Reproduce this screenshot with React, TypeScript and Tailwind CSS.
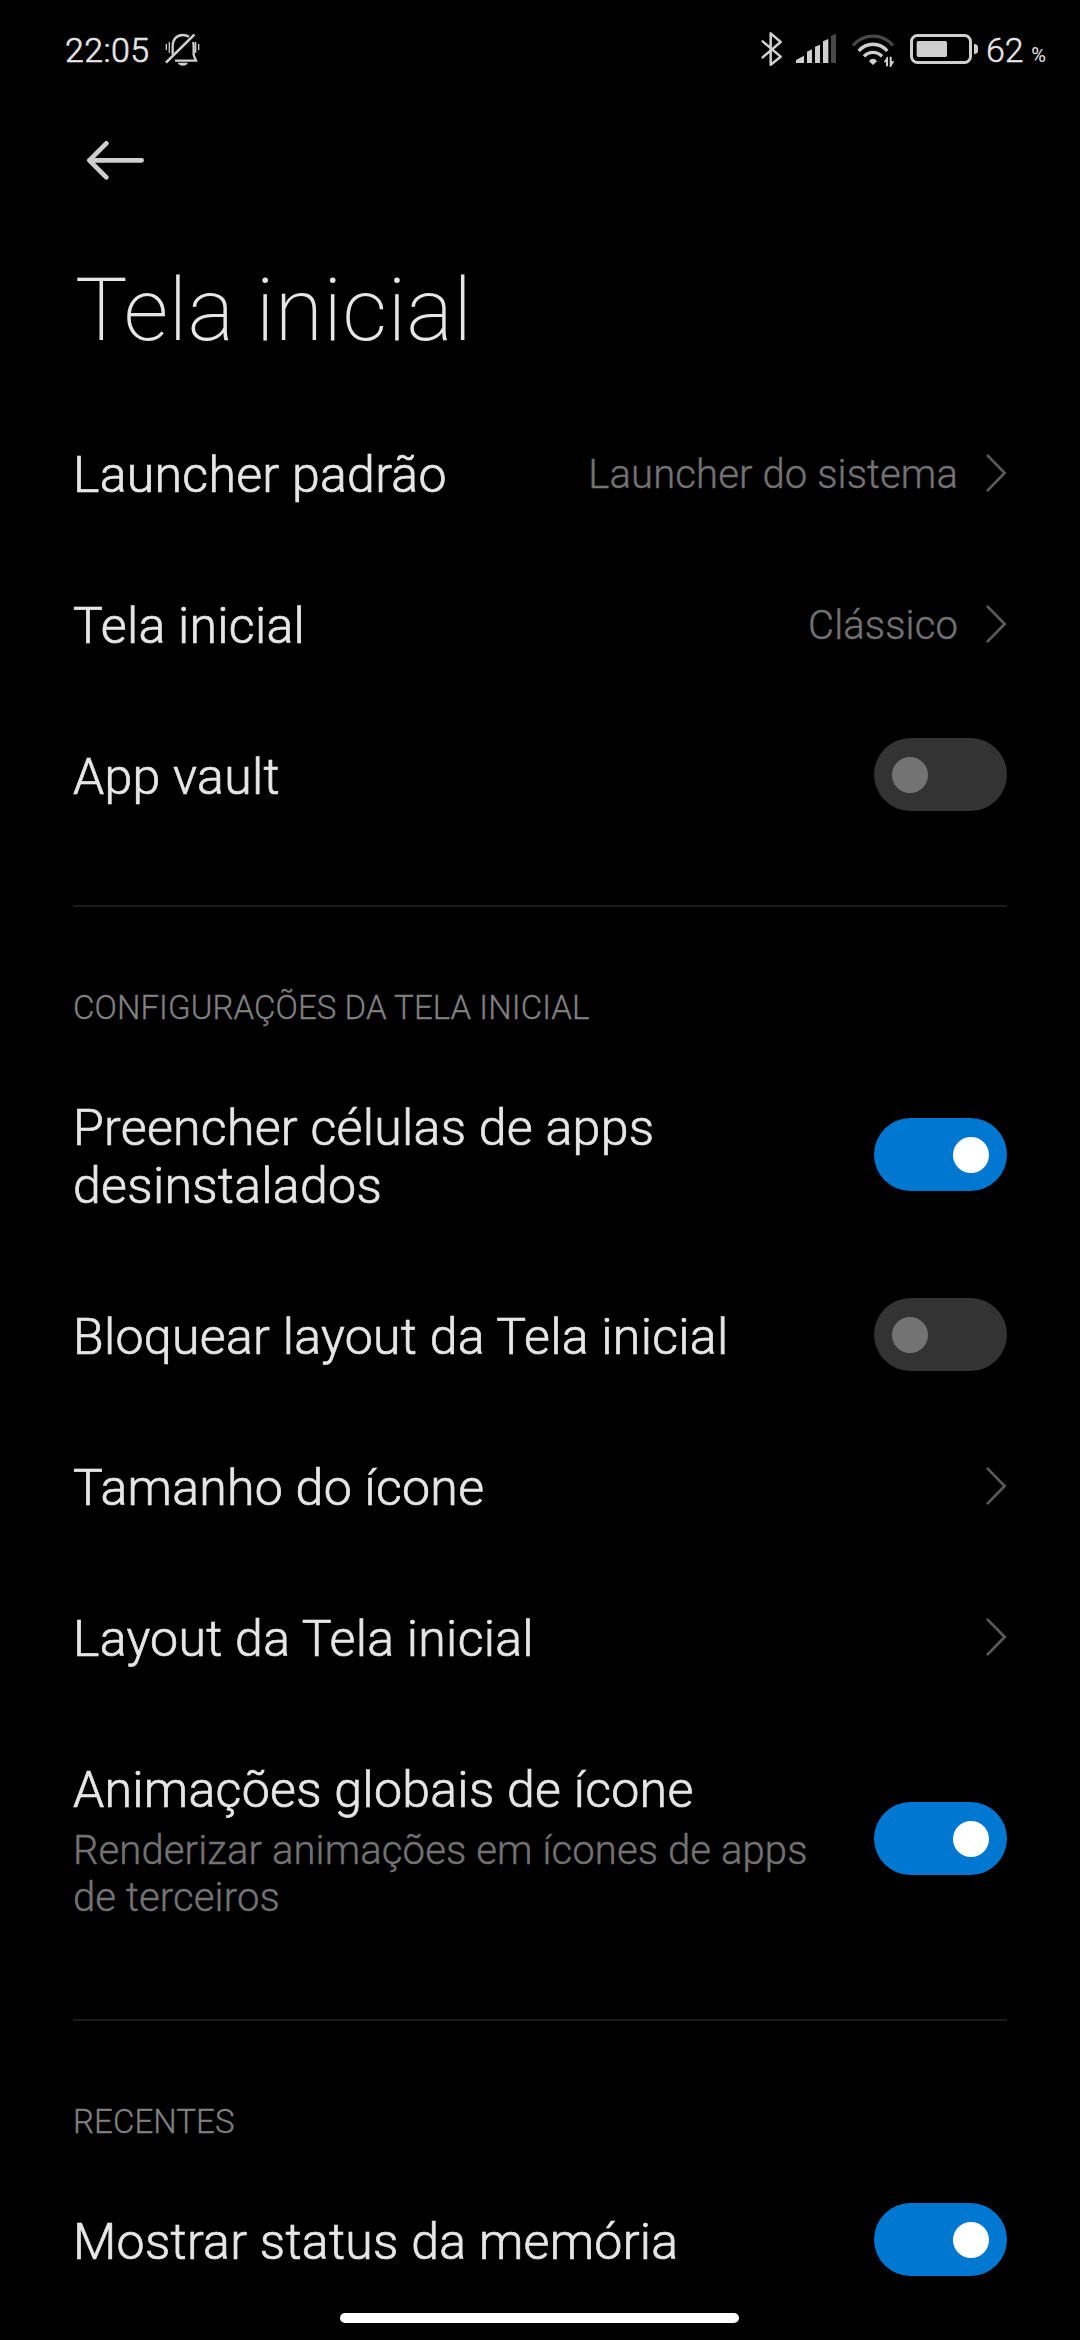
import type { ReactNode } from "react";

function BellOff() {
  return (
    <svg className="h-[60px] w-[40px]" viewBox="340 0 120 180" fill="none" stroke="#cfcfcf" strokeWidth="7">
      <path d="M369 104V78C369 57 382 45 400 45C407 45 413 47 418 50" />
      <path d="M430 66C432 70 432 74 432 80V102C432 110 436 114 439 122H376" />
      <path d="M349 128L434 44" strokeWidth="8" />
      <path d="M384 128H415C412 134 407 137 400 137S387 134 384 128Z" fill="#cfcfcf" stroke="none" />
      <path d="M350 72V90M359 66V98M438 66V98M447 72V90" strokeWidth="4" />
    </svg>
  );
}

function Bluetooth() {
  return (
    <svg className="h-[60px] w-[35px]" viewBox="0 0 105 180" fill="none" stroke="#cfcfcf" strokeWidth="7.5" strokeLinejoin="round" strokeLinecap="round">
      <path d="M38 64L92 110L62 134V40L92 66L38 112" />
    </svg>
  );
}

function Signal() {
  return (
    <svg className="h-[60px] w-[55px]" viewBox="105 0 165 180" fill="#cfcfcf">
      <path d="M138 129V120L162 107V129Z" />
      <path d="M171 129V95L186 88V129Z" />
      <path d="M195 129V80L210 74V129Z" />
      <path d="M219 129V64L235 57V129Z" />
      <path d="M243 129V48L258 41V129Z" fill="#484848" />
    </svg>
  );
}

function Wifi() {
  return (
    <svg className="h-[60px] w-[60px]" viewBox="270 0 180 180" fill="none" strokeWidth="10">
      <path d="M309 76C342 39 396 39 429 76" stroke="#484848" />
      <path d="M326 93C350 66 388 66 412 93" stroke="#cfcfcf" />
      <path d="M342 109C357 93 381 93 396 109" stroke="#cfcfcf" />
      <path d="M357 124C363 114 375 114 381 124L369 135Z" fill="#cfcfcf" stroke="none" />
      <path d="M401 127L411 110H414V139H408V127ZM419 110H425V124H433L423 141H419Z" fill="#cfcfcf" stroke="none" />
    </svg>
  );
}

function Battery() {
  return (
    <svg className="h-[60px] w-[84px]" viewBox="450 0 252 180" fill="#cfcfcf">
      <rect x="484.500" y="46.500" width="177" height="81" rx="18" fill="none" stroke="#cfcfcf" strokeWidth="9" />
      <rect x="500" y="63" width="91" height="48" rx="5" />
      <path d="M672 72C680 72 684 76 684 82V92C684 98 680 102 672 102Z" />
    </svg>
  );
}

function BackArrow() {
  return (
    <svg className="h-[40px] w-[60px]" viewBox="0 0 180 120" fill="none" stroke="#cfcfcf" strokeWidth="14" strokeLinecap="round" strokeLinejoin="round">
      <path d="M67 10L16 61L67 112M16 61H173" />
    </svg>
  );
}

function Chevron() {
  return (
    <svg className="h-[38px] w-[21px] shrink-0" viewBox="0 0 63 114" fill="none" stroke="#5a5a5a" strokeWidth="8" strokeLinecap="round" strokeLinejoin="round">
      <path d="M5 5L56 57L5 109" />
    </svg>
  );
}

function Toggle({ on = false }: { on?: boolean }) {
  return (
    <div
      role="switch"
      aria-checked={on}
      className={
        "flex h-[73.5px] w-[133.5px] shrink-0 items-center rounded-full px-[18.5px] " +
        (on ? "justify-end bg-[#0077d0]" : "justify-start bg-[#333333]")
      }
    >
      <div className={"size-9 rounded-full " + (on ? "bg-white" : "bg-[#737373]")} />
    </div>
  );
}

function Row({ title, summary, value, children }: { title: string; summary?: string; value?: string; children: ReactNode }) {
  return (
    <div className="flex items-center justify-between">
      <div className="max-w-[760px] pt-[49px] pb-[44px] font-light">
        <div className="text-[50px] leading-[58px] tracking-[0.3px] text-[#e6e6e6] [-webkit-text-stroke:0.7px]">
          {title.split("\n").map((line) => (
            <div key={line} className="whitespace-nowrap">{line}</div>
          ))}
        </div>
        {summary && (
          <div className="pt-[8px] text-[40px] leading-[47px] tracking-[0.12px] text-[#737373] [-webkit-text-stroke:0.4px]">{summary}</div>
        )}
      </div>
      <div className="flex items-center justify-end">
        {value && (
          <span className="mr-[28px] pt-[3px] whitespace-nowrap text-[40px] font-light leading-[47px] tracking-[0.12px] text-[#737373] [-webkit-text-stroke:0.4px]">
            {value}
          </span>
        )}
        {children}
      </div>
    </div>
  );
}

function Divider() {
  return <div className="h-[2px] bg-[#1a1a1a]" />;
}

function SectionTitle({ children }: { children: ReactNode }) {
  return (
    <div className="pt-[82px] pb-[23px] text-[33px] font-light leading-[38px] tracking-[0.08px] text-[#808080] [-webkit-text-stroke:0.3px]">
      {children}
    </div>
  );
}

export default function App() {
  return (
    <div className="relative h-[2340px] w-[1080px] overflow-hidden bg-black font-['Roboto',sans-serif]">
      <header className="flex h-[100px] items-center justify-between pl-[65px] pr-[34px] text-[#e6e6e6]">
        <div className="flex items-center">
          <span className="w-[98px] text-[34px] font-light tracking-[0.4px] [-webkit-text-stroke:0.6px]">22:05</span>
          <BellOff />
        </div>
        <div className="flex items-center">
          <Bluetooth />
          <Signal />
          <Wifi />
          <Battery />
          <div className="flex w-[62px] items-baseline justify-between pl-[2px]">
            <span className="text-[34px] font-light [-webkit-text-stroke:0.4px]">62</span>
            <span className="text-[20px]">%</span>
          </div>
        </div>
      </header>
      <div className="flex h-[120px] items-start pl-[84px] pt-[40px]">
        <BackArrow />
      </div>
      <main className="px-[73px]">
        <h1 className="h-[177px] pt-[38px] pl-[2px] text-[88px] font-extralight leading-[103px] tracking-[0.2px] text-[#e6e6e6]">Tela inicial</h1>
        <Row title="Launcher padrão" value="Launcher do sistema"><Chevron /></Row>
        <Row title="Tela inicial" value="Clássico"><Chevron /></Row>
        <Row title="App vault"><Toggle /></Row>
        <div className="pt-[55px]"><Divider /></div>
        <SectionTitle>CONFIGURAÇÕES DA TELA INICIAL</SectionTitle>
        <Row title={"Preencher células de apps\ndesinstalados"}><Toggle on /></Row>
        <Row title="Bloquear layout da Tela inicial"><Toggle /></Row>
        <Row title="Tamanho do ícone"><Chevron /></Row>
        <Row title="Layout da Tela inicial"><Chevron /></Row>
        <Row title="Animações globais de ícone" summary="Renderizar animações em ícones de apps de terceiros"><Toggle on /></Row>
        <div className="pt-[54px]"><Divider /></div>
        <SectionTitle>RECENTES</SectionTitle>
        <Row title="Mostrar status da memória"><Toggle on /></Row>
      </main>
      <div className="absolute bottom-[17px] left-[340px] h-[10px] w-[399px] rounded-full bg-white" />
    </div>
  );
}
